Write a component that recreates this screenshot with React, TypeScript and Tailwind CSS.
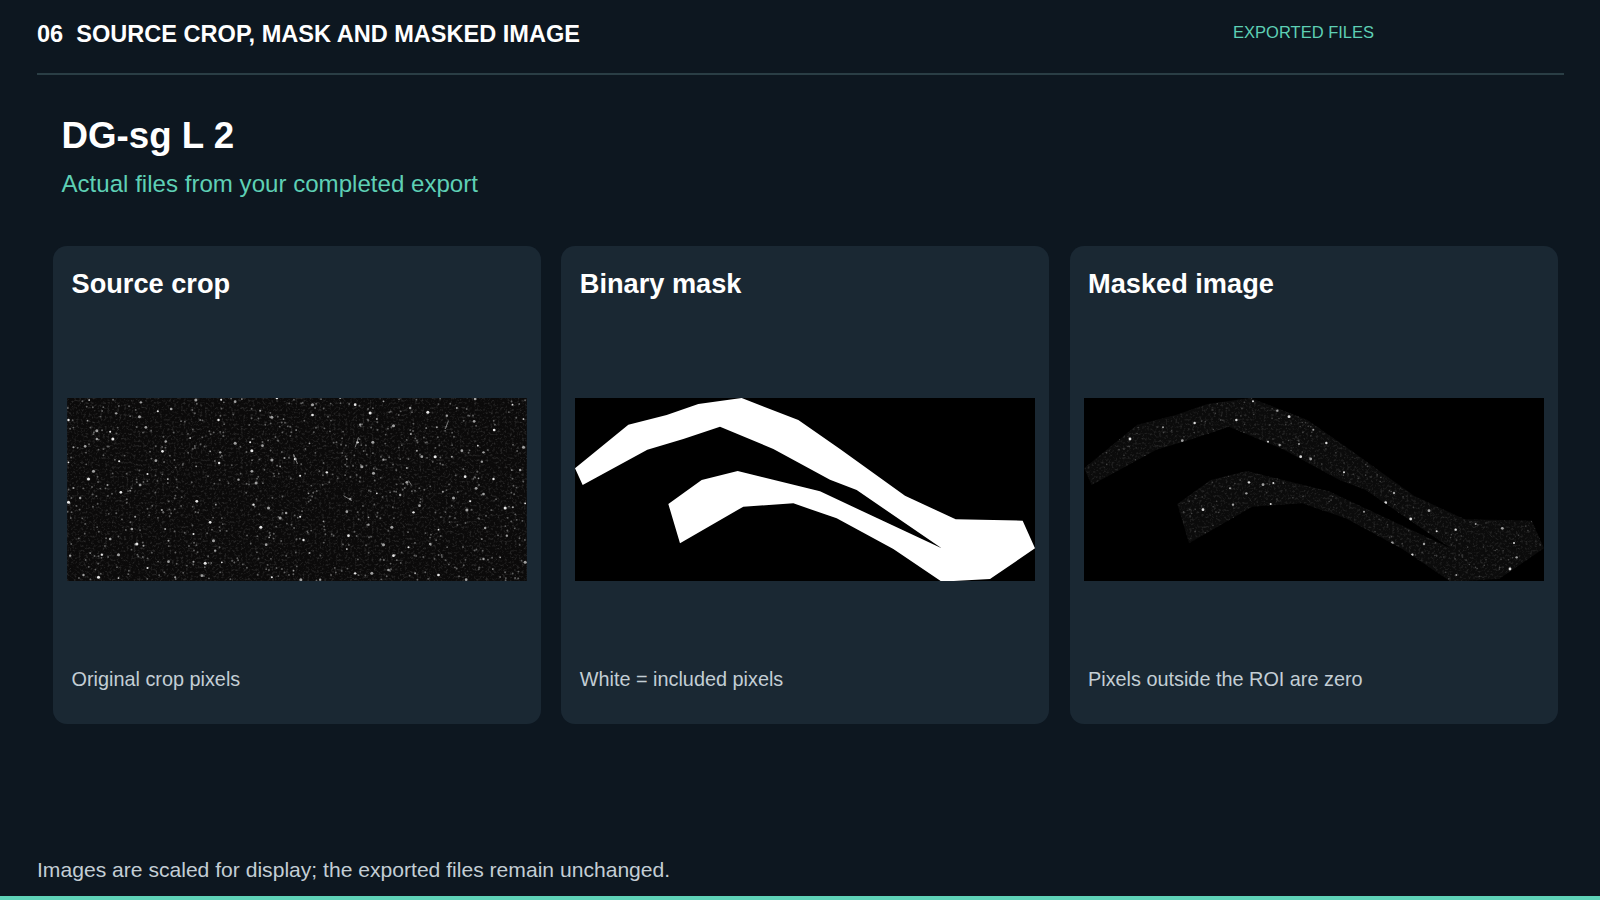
const SOURCE_DOTS: [number, number, number][] = ([
[117,58],[272,65],[437,58],[513,57],[555,63],[575,55],[680,52],[787,72],[870,52],[915,72],[1000,62],[1080,82],[1133,95],[1220,82],[1275,55],[1387,72],
[198,98],[268,108],[323,92],[363,85],[112,120],[55,118],[665,110],[630,90],[787,103],[700,115],[930,132],[960,97],[980,115],[1272,122],[1420,115],[1190,105],
[140,150],[180,153],[287,140],[738,148],[505,118],[1030,135],[1160,140],[1332,148],[1128,142],
[140,175],[188,175],[70,200],[105,197],[420,172],[347,182],[555,188],[600,185],[637,195],[778,188],[922,185],[968,185],[1082,160],
[337,212],[480,212],[510,215],[605,210],[1100,210],[1235,210],[1283,195],[1300,215],[1420,200],
[207,242],[317,240],[438,257],[507,247],[665,238],[703,232],[735,235],[890,235],[1000,237],[1155,228],[1205,228],[1115,228],[55,245],[1295,243],
[130,272],[292,280],[605,272],[690,257],[830,275],[935,258],[1070,262],[1245,288],[1385,268],[1410,268],
[115,295],[172,313],[270,313],[353,295],[565,297],[618,307],[750,285],[1070,305],[1285,293],[1330,295],[970,278],
[70,322],[212,335],[240,330],[90,352],[55,365],[1178,333],[1278,323],[980,338],[1050,343],[1210,352],[1260,362],[1300,340],
[497,372],[610,372],[655,382],[335,388],[440,362],[775,338],[900,355],[1365,382],[1388,380],[1108,375],[1425,368],
[708,397],[690,412],[750,408],[890,393],[955,410],[1090,395],[1250,388],
[255,408],[480,425],[820,422],[955,432],[632,440],[345,445],[245,445],[1165,447],[1305,442],[1025,440],
[430,460],[180,475],[657,470],[760,478],[490,480],[355,480],[895,465],[1295,475],[1370,465],
[260,490],[280,495],[648,492],[890,505],[495,510],[1000,492],[1075,500],[1140,490],
[120,517],[155,522],[205,522],[778,517],[1030,525],[1350,530],[1300,535],
[465,548],[430,543],[355,543],[515,545],[60,525],[1425,545],
[292,562],[1015,568],[730,570],[915,578],[965,578],[1095,578],[1165,583],[1328,565],[100,583],[145,590],[375,590],[455,585],[205,592],[810,597],[752,597],[665,590],[1248,597],
] as [number, number][]).map(([x, y], i) => [x, y, 2.6 + ((i * 7) % 5) * 0.5]);

const MASKED_DOTS: [number, number][] = [
[547,62],[620,90],[655,108],[728,147],[767,187],[720,235],[820,275],[970,337],[945,366],[880,393],[1155,447],[1295,443],[1330,487],[1338,530],[1318,565],[1157,583],[1025,522],[965,487],[600,370],[487,372],[397,387],[478,323],[535,305],[577,312],[608,307],[527,338],[178,175],[277,140],[372,127],[335,180],[592,183],[627,193],[690,228],[685,190],[497,118],[1075,390],[1098,452],[1060,490],[1020,415],[1215,430],
];

const MASK = "45,263 205,132 320,103 415,70 545,52 715,118 840,205 1035,345 1187,416 1388,420 1425,503 1290,595 1145,603 1000,505 830,413 700,368 550,378 360,488 325,370 425,298 533,271 780,332 1145,503 890,328 810,297 640,205 480,138 370,175 262,207 68,313";

function faintDots(count: number, seed: number): [number, number][] {
  let s = seed;
  const next = () => {
    s = (s * 16807) % 2147483647;
    return s / 2147483647;
  };
  const out: [number, number][] = [];
  for (let i = 0; i < count; i++) out.push([40 + next() * 1395, 52 + next() * 549]);
  return out;
}
const FAINT = faintDots(620, 4242);

function NoiseFilter({ id, opacity }: { id: string; opacity: number }) {
  return (
    <filter id={id} x="0" y="0" width="100%" height="100%" colorInterpolationFilters="sRGB">
      <feTurbulence type="fractalNoise" baseFrequency="0.14" numOctaves="3" seed="11" />
      <feColorMatrix type="matrix" values="0 0 0 0 0.6  0 0 0 0 0.6  0 0 0 0 0.6  2.2 0 0 0 -1.1" />
      <feGaussianBlur stdDeviation="1.8" />
      <feComponentTransfer>
        <feFuncA type="linear" slope={opacity} />
      </feComponentTransfer>
    </filter>
  );
}

function SourceCrop() {
  return (
    <svg viewBox="51 52 1379 549" className="block w-[460px] h-[183px]">
      <defs>
        <NoiseFilter id="noise-a" opacity={0.3} />
        <filter id="soft-a"><feGaussianBlur stdDeviation="2.2" /></filter>
      </defs>
      <rect x="51" y="52" width="1379" height="549" fill="#0b0a0a" />
      <rect x="51" y="52" width="1379" height="549" filter="url(#noise-a)" />
      <g filter="url(#soft-a)">
        {FAINT.map(([x, y], i) => (
          <circle key={i} cx={x} cy={y} r={2.8} fill="#626262" />
        ))}
        {SOURCE_DOTS.map(([x, y, r], i) => (
          <circle key={i} cx={x} cy={y} r={r} fill={i % 3 === 0 ? "#e8e8e8" : "#a0a0a0"} />
        ))}
        <path d="M915 200 L925 170 M730 220 L742 250 M1195 120 L1185 145 M1075 300 L1085 315 M880 345 L905 360" stroke="#8f8f8f" strokeWidth="2.5" fill="none" />
      </g>
    </svg>
  );
}

function BinaryMask() {
  return (
    <svg viewBox="45 52 1380 549" className="block w-[460px] h-[183px]">
      <rect x="45" y="52" width="1380" height="549" fill="#000000" />
      <polygon points={MASK} fill="#ffffff" />
    </svg>
  );
}

function MaskedImage() {
  return (
    <svg viewBox="40 52 1380 549" className="block w-[460px] h-[183px]">
      <defs>
        <NoiseFilter id="noise-b" opacity={0.26} />
        <filter id="soft-b"><feGaussianBlur stdDeviation="2.2" /></filter>
        <clipPath id="roi"><polygon points={MASK} transform="translate(-5 0)" /></clipPath>
      </defs>
      <rect x="40" y="52" width="1380" height="549" fill="#000000" />
      <g clipPath="url(#roi)">
        <rect x="40" y="52" width="1380" height="549" fill="#0b0b0b" />
        <rect x="40" y="52" width="1380" height="549" filter="url(#noise-b)" />
        <g filter="url(#soft-b)">
          {FAINT.map(([x, y], i) => (
            <circle key={i} cx={x} cy={y} r={2.4} fill="#484848" />
          ))}
          {MASKED_DOTS.map(([x, y], i) => (
            <circle key={i} cx={x} cy={y} r={3 + (i % 3) * 0.6} fill={i % 2 === 0 ? "#dcdcdc" : "#a0a0a0"} />
          ))}
        </g>
      </g>
    </svg>
  );
}

function Card({ title, caption, children }: { title: string; caption: string; children: React.ReactNode }) {
  return (
    <div className="flex flex-col w-[488px] h-[478px] rounded-[14px] bg-[#1a2833] pt-[22px] px-[14px] pb-[33px]">
      <h3 className="pl-[4.5px] text-[27.2px] leading-[32px] font-bold text-white">{title}</h3>
      <div className="flex-1 flex items-center">
        <div className="w-[460px] h-[183px] mt-[12px]">{children}</div>
      </div>
      <p className="pl-[4.5px] text-[19.85px] leading-[24px] text-[#c3ced5]">{caption}</p>
    </div>
  );
}

export default function App() {
  return (
    <div className="flex flex-col w-[1600px] h-[900px] overflow-hidden bg-[#0d1720] font-['Liberation_Sans',Arial,sans-serif]">
      <header className="flex items-center h-[75px] ml-[37px] mr-[36px] pb-[6px] border-b-2 border-[#2a3e45]">
        <span className="text-[23.55px] leading-[30px] font-bold text-white whitespace-pre">06  SOURCE CROP, MASK AND MASKED IMAGE</span>
        <span className="ml-auto mr-[190px] mb-[3px] text-[16.5px] leading-[22px] text-[#5ed0b5]">EXPORTED FILES</span>
      </header>
      <section className="pl-[61.5px] pt-[38px]">
        <h1 className="text-[36.7px] leading-[46px] font-bold text-white">DG-sg L 2</h1>
        <p className="mt-[11px] text-[24.1px] leading-[28px] text-[#5ed0b5]">Actual files from your completed export</p>
      </section>
      <main className="flex gap-[20.25px] pl-[53px] pt-[48px]">
        <Card title="Source crop" caption="Original crop pixels"><SourceCrop /></Card>
        <Card title="Binary mask" caption="White = included pixels"><BinaryMask /></Card>
        <Card title="Masked image" caption="Pixels outside the ROI are zero"><MaskedImage /></Card>
      </main>
      <footer className="flex-1 flex items-end pl-[37px] pb-[13px]">
        <p className="text-[21.1px] leading-[26px] text-[#c3ced5]">Images are scaled for display; the exported files remain unchanged.</p>
      </footer>
      <div className="h-[4px] bg-[#5fd3b8]" />
    </div>
  );
}
